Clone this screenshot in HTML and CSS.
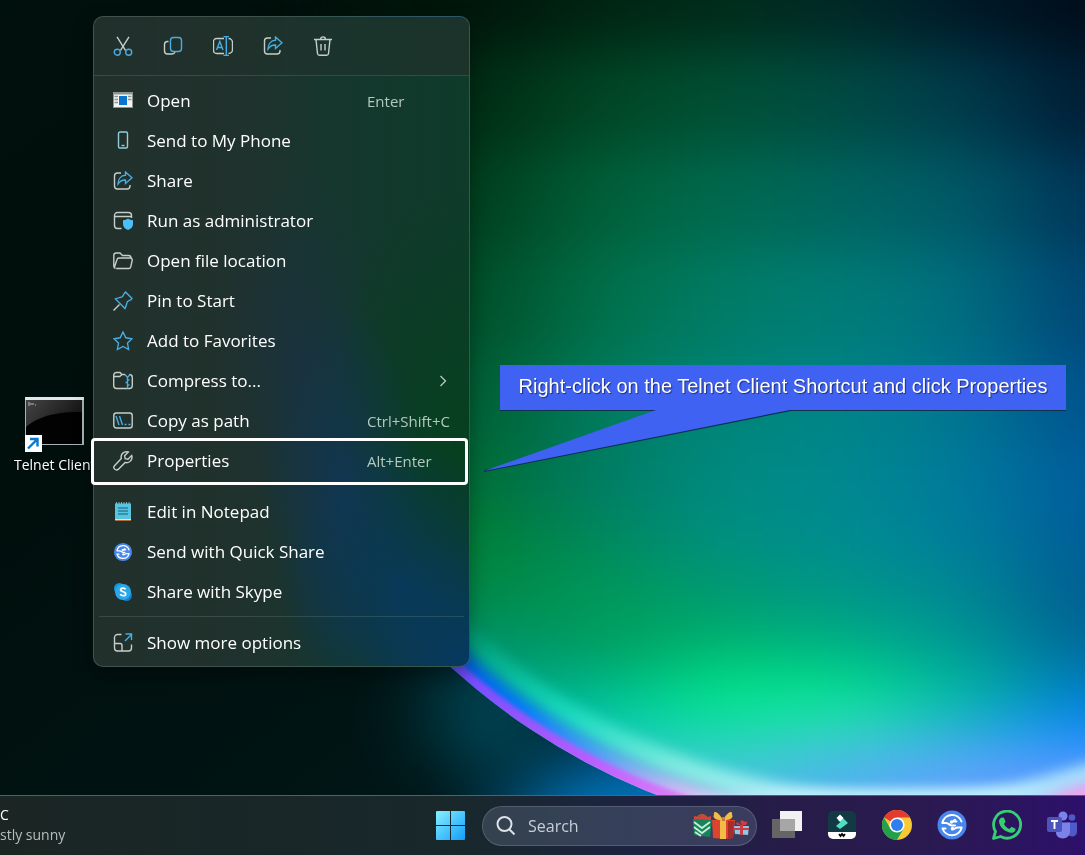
FILE: index.html
```html
<!DOCTYPE html>
<html lang="en">
<head>
<meta charset="utf-8">
<title>Desktop</title>
<link rel="stylesheet" href="styles.css">
</head>
<body>
<svg class="wallpaper" viewBox="0 0 1085 855" preserveAspectRatio="xMidYMid slice" aria-hidden="true">
  <defs>
    <clipPath id="sphere"><circle cx="900" cy="174" r="667"/></clipPath>
    <filter id="b8" color-interpolation-filters="sRGB" x="-50%" y="-50%" width="200%" height="200%"><feGaussianBlur stdDeviation="7"/></filter>
    <filter id="b3" color-interpolation-filters="sRGB" x="-50%" y="-50%" width="200%" height="200%"><feGaussianBlur stdDeviation="2"/></filter>
    <filter id="b20" color-interpolation-filters="sRGB" x="-60%" y="-150%" width="220%" height="400%"><feGaussianBlur stdDeviation="20 12"/></filter>
    <filter id="b50" color-interpolation-filters="sRGB" x="-150%" y="-150%" width="400%" height="400%"><feGaussianBlur stdDeviation="42"/></filter>
    <filter id="strips" color-interpolation-filters="sRGB" filterUnits="userSpaceOnUse" x="-200" y="-250" width="1600" height="1400"><feGaussianBlur stdDeviation="38 28"/></filter>
    <linearGradient id="space" x1="0" y1="0" x2="1" y2="1"><stop offset="0" stop-color="#00100c"/><stop offset=".3" stop-color="#000f0c"/><stop offset="1" stop-color="#001c20"/></linearGradient>
    <linearGradient id="r0" gradientUnits="userSpaceOnUse" x1="470" x2="1085" y1="0" y2="0"><stop offset="0" stop-color="#00140a"/><stop offset=".21" stop-color="#002412"/><stop offset=".41" stop-color="#002c1a"/><stop offset=".62" stop-color="#002826"/><stop offset=".81" stop-color="#001828"/><stop offset="1" stop-color="#000c18"/></linearGradient>
    <linearGradient id="r1" gradientUnits="userSpaceOnUse" x1="470" x2="1085" y1="0" y2="0"><stop offset="0" stop-color="#002a12"/><stop offset=".21" stop-color="#004624"/><stop offset=".41" stop-color="#005034"/><stop offset=".62" stop-color="#004a44"/><stop offset=".81" stop-color="#003a4c"/><stop offset="1" stop-color="#001c34"/></linearGradient>
    <linearGradient id="r2" gradientUnits="userSpaceOnUse" x1="470" x2="1085" y1="0" y2="0"><stop offset="0" stop-color="#003c1c"/><stop offset=".21" stop-color="#006038"/><stop offset=".41" stop-color="#006a4e"/><stop offset=".62" stop-color="#006460"/><stop offset=".81" stop-color="#005868"/><stop offset="1" stop-color="#003458"/></linearGradient>
    <linearGradient id="r3" gradientUnits="userSpaceOnUse" x1="470" x2="1085" y1="0" y2="0"><stop offset="0" stop-color="#004c26"/><stop offset=".21" stop-color="#007048"/><stop offset=".41" stop-color="#007c66"/><stop offset=".62" stop-color="#007c78"/><stop offset=".81" stop-color="#006c80"/><stop offset="1" stop-color="#004474"/></linearGradient>
    <linearGradient id="r4" gradientUnits="userSpaceOnUse" x1="470" x2="1085" y1="0" y2="0"><stop offset="0" stop-color="#005c30"/><stop offset=".21" stop-color="#007c5c"/><stop offset=".41" stop-color="#008478"/><stop offset=".62" stop-color="#008488"/><stop offset=".81" stop-color="#007490"/><stop offset="1" stop-color="#00508c"/></linearGradient>
    <linearGradient id="r5" gradientUnits="userSpaceOnUse" x1="470" x2="1085" y1="0" y2="0"><stop offset="0" stop-color="#006c34"/><stop offset=".21" stop-color="#007c64"/><stop offset=".41" stop-color="#008a80"/><stop offset=".62" stop-color="#008890"/><stop offset=".81" stop-color="#00789c"/><stop offset="1" stop-color="#005c9c"/></linearGradient>
    <linearGradient id="r6" gradientUnits="userSpaceOnUse" x1="470" x2="1085" y1="0" y2="0"><stop offset="0" stop-color="#008034"/><stop offset=".21" stop-color="#00885c"/><stop offset=".41" stop-color="#009080"/><stop offset=".62" stop-color="#008c92"/><stop offset=".81" stop-color="#007c9c"/><stop offset="1" stop-color="#005c98"/></linearGradient>
    <linearGradient id="r7" gradientUnits="userSpaceOnUse" x1="470" x2="1085" y1="0" y2="0"><stop offset="0" stop-color="#008848"/><stop offset=".21" stop-color="#009a58"/><stop offset=".41" stop-color="#009c70"/><stop offset=".62" stop-color="#009888"/><stop offset=".81" stop-color="#008894"/><stop offset="1" stop-color="#005c90"/></linearGradient>
    <linearGradient id="r8" gradientUnits="userSpaceOnUse" x1="470" x2="1085" y1="0" y2="0"><stop offset="0" stop-color="#009070"/><stop offset=".21" stop-color="#009c60"/><stop offset=".41" stop-color="#00b86e"/><stop offset=".62" stop-color="#00b486"/><stop offset=".81" stop-color="#009898"/><stop offset="1" stop-color="#00689c"/></linearGradient>
    <linearGradient id="r9" gradientUnits="userSpaceOnUse" x1="470" x2="1085" y1="0" y2="0"><stop offset="0" stop-color="#00a088"/><stop offset=".21" stop-color="#00b88c"/><stop offset=".41" stop-color="#00ec8e"/><stop offset=".62" stop-color="#00e48e"/><stop offset=".81" stop-color="#00b89c"/><stop offset="1" stop-color="#007cc8"/></linearGradient>
    <linearGradient id="r10" gradientUnits="userSpaceOnUse" x1="470" x2="1085" y1="0" y2="0"><stop offset="0" stop-color="#00c0a8"/><stop offset=".21" stop-color="#00ccb4"/><stop offset=".41" stop-color="#10dca0"/><stop offset=".62" stop-color="#34dcc0"/><stop offset=".81" stop-color="#20b0d8"/><stop offset="1" stop-color="#0888ff"/></linearGradient>
    <linearGradient id="r11" gradientUnits="userSpaceOnUse" x1="470" x2="1085" y1="0" y2="0"><stop offset="0" stop-color="#40d8d0"/><stop offset=".41" stop-color="#48c8dc"/><stop offset=".62" stop-color="#50b0f0"/><stop offset=".81" stop-color="#64a2ff"/><stop offset="1" stop-color="#5c98ff"/></linearGradient>
    <linearGradient id="rim" gradientUnits="userSpaceOnUse" x1="250" y1="300" x2="760" y2="840"><stop offset="0" stop-color="#001018" stop-opacity="0"/><stop offset=".45" stop-color="#2040c0"/><stop offset=".58" stop-color="#7a4dff"/><stop offset=".76" stop-color="#b85cff"/><stop offset="1" stop-color="#ff9cf0"/></linearGradient>
    <linearGradient id="rimblue" gradientUnits="userSpaceOnUse" x1="250" y1="300" x2="760" y2="840"><stop offset="0" stop-color="#001018" stop-opacity="0"/><stop offset=".5" stop-color="#0050e0"/><stop offset=".65" stop-color="#0876ff"/><stop offset=".76" stop-color="#5098f8"/><stop offset=".88" stop-color="#d8b8f4"/><stop offset="1" stop-color="#f4dcfa"/></linearGradient>
    <linearGradient id="rimteal" gradientUnits="userSpaceOnUse" x1="400" y1="560" x2="760" y2="840"><stop offset="0" stop-color="#00a080" stop-opacity="0"/><stop offset=".25" stop-color="#08c8a8" stop-opacity=".35"/><stop offset=".5" stop-color="#20e0c4" stop-opacity=".85"/><stop offset=".75" stop-color="#80ece0"/><stop offset="1" stop-color="#b4ecf8"/></linearGradient>
  </defs>
  <rect width="1085" height="855" fill="url(#space)"/>
  <ellipse cx="650" cy="840" rx="150" ry="95" fill="#0078c4" filter="url(#b50)"/>
  <ellipse cx="490" cy="710" rx="60" ry="60" fill="#006078" opacity=".8" filter="url(#b50)"/>
  <g clip-path="url(#sphere)">
    <g filter="url(#strips)">
      <rect x="-150" y="-200" width="1450" height="251" fill="url(#r0)"/>
      <rect x="-150" y="50" width="1450" height="101" fill="url(#r1)"/>
      <rect x="-150" y="150" width="1450" height="101" fill="url(#r2)"/>
      <rect x="-150" y="250" width="1450" height="101" fill="url(#r3)"/>
      <rect x="-150" y="350" width="1450" height="91" fill="url(#r4)"/>
      <rect x="-150" y="440" width="1450" height="71" fill="url(#r5)"/>
      <rect x="-150" y="510" width="1450" height="61" fill="url(#r6)"/>
      <rect x="-150" y="570" width="1450" height="56" fill="url(#r7)"/>
      <rect x="-150" y="625" width="1450" height="46" fill="url(#r8)"/>
      <rect x="-150" y="670" width="1450" height="41" fill="url(#r9)"/>
      <rect x="-150" y="710" width="1450" height="39" fill="url(#r10)"/>
      <rect x="-150" y="748" width="1450" height="300" fill="url(#r11)"/>
    </g>
    <rect x="100" y="-150" width="240" height="500" fill="#000f0c" filter="url(#b50)"/>
    <circle cx="900" cy="162" r="644" fill="none" stroke="url(#rimteal)" stroke-width="22" filter="url(#b8)"/>
    <circle cx="900" cy="166" r="664" fill="none" stroke="url(#rimblue)" stroke-width="24" filter="url(#b8)"/>
    <circle cx="900" cy="174" r="664" fill="none" stroke="url(#rim)" stroke-width="13" filter="url(#b3)"/>
    <ellipse cx="920" cy="808" rx="240" ry="18" fill="#c4f0fc" filter="url(#b8)"/>
    <ellipse cx="1095" cy="780" rx="90" ry="10" fill="#a0d4ff" filter="url(#b20)" transform="rotate(-17 1095 780)"/>
    <ellipse cx="1095" cy="797" rx="62" ry="14" fill="#f49cec" filter="url(#b8)" transform="rotate(-15 1095 797)"/>
  </g>
</svg>

<main class="desktop">
  <a class="shortcut" href="#telnet">
    <svg class="shortcut-icon" viewBox="0 0 60 56" aria-hidden="true">
      <defs><linearGradient id="cmd" x1="0" y1="0" x2="1" y2=".4"><stop offset="0" stop-color="#444"/><stop offset="1" stop-color="#161616"/></linearGradient></defs>
      <rect x="1" y="0" width="59" height="48" fill="#a9b3b6"/><rect x="1" y="0" width="59" height="3" fill="#e2e8ea"/>
      <rect x="2" y="3" width="56" height="44" fill="#020202"/><path d="M2 3h56v12C34 14 14 19 2 30z" fill="url(#cmd)"/>
      <path d="M4 6h2M4 8h2M7 6v2M9 6v2M11 8h1" stroke="#bbb" fill="none"/>
      <rect x="1" y="38" width="17" height="17" fill="#fff"/><path d="M4 51.500l9-9M6 42h7.500v7.500" stroke="#0878ce" stroke-width="2.400" fill="none"/>
    </svg>
    <span class="shortcut-name">Telnet Client</span>
  </a>

  <section class="menu" aria-label="Context menu">
    <div class="menu-tools">
      <button class="tool" aria-label="Cut"><svg class="icon" viewBox="0 0 20 20"><path d="M4 .8l8.500 13.500M16 .8L7.500 14.300"/><g class="blue"><circle cx="4.300" cy="16.200" r="3"/><circle cx="15.700" cy="16.200" r="3"/></g></svg></button>
      <button class="tool" aria-label="Copy"><svg class="icon" viewBox="0 0 20 20"><path d="M5.500 5.500H4.500a3 3 0 00-3 3V15a3 3 0 003 3H9a3 3 0 003-2"/><rect class="blue" x="7.500" y="1.500" width="11" height="14" rx="3"/></svg></button>
      <button class="tool" aria-label="Rename"><svg class="icon" viewBox="0 0 20 20"><path d="M11 2.500H3.500a3 3 0 00-3 3v9a3 3 0 003 3H11M15.500 2.500a4 4 0 014 4v7a4 4 0 01-4 4"/><path class="blue" d="M13.300.5v19M10.500.5H16M10.500 19.500H16M3.500 14l3.300-8.500L10 14M4.700 11.500h4.200"/></svg></button>
      <button class="tool" aria-label="Share"><svg class="icon" viewBox="0 0 20 20"><use href="#share"/></svg></button>
      <button class="tool" aria-label="Delete"><svg class="icon" viewBox="0 0 20 20"><path d="M1 3.500h18M3 3.500l1.500 14a2 2 0 002 1.800h7a2 2 0 002-1.800L17 3.500M7.500 3.500C7.500 0 12.500 0 12.500 3.500M8 8v6.500M12 8v6.500"/></svg></button>
    </div>
    <div class="menu-list">
      <button class="item"><svg class="icon plain" viewBox="0 0 20 20"><path fill="#8b9494" d="M0 1h20v16H0z"/><path fill="#f4f4f4" d="M1 3.500h18V16H1z"/><path fill="#0a74cf" d="M6 5h8v9H6z"/><path stroke="#8d9494" d="M1.500 5.500H5M1.500 8.500H5M1.500 11.500H5M15 5.500h3.500M15 8.500h3.500"/></svg><span>Open</span><kbd>Enter</kbd></button>
      <button class="item"><svg class="icon" viewBox="0 0 20 20"><rect x="5.500" y="1" width="9" height="16" rx="1.500" stroke="#8fd0dd"/><path d="M8.500 14.500h3" stroke="#8fd0dd"/></svg><span>Send to My Phone</span></button>
      <button class="item"><svg class="icon" viewBox="0 0 20 20"><g id="share"><path d="M8 2H4.500a3 3 0 00-3 3v10a3 3 0 003 3h9.500a3 3 0 003-3V14"/><path class="blue" d="M12.500 1l6.500 5.800-6.500 5.700V9C9 8.800 7 10 5 13c0-5 3-8.500 7.500-8.700z"/></g></svg><span>Share</span></button>
      <button class="item"><svg class="icon" viewBox="0 0 20 20"><path d="M8.500 17.500H4.500a3 3 0 01-3-3V4.500a3 3 0 013-3h11a3 3 0 013 3V7M1.500 5.500h17"/><path d="M15 7.500c1.500 1.200 3 1.500 5 1.700v3.800c0 3-2 4.800-5 6-3-1.200-5-3-5-6V9.200c2-.2 3.500-.5 5-1.700z" fill="#4cc0fa" stroke="none"/></svg><span>Run as administrator</span></button>
      <button class="item"><svg class="icon" viewBox="0 0 20 20"><path d="M2.500 17.500A2.500 2.500 0 01.8 15V4.500a2.500 2.500 0 012.500-2.500H7l2.500 2.500h6A2.500 2.500 0 0118 7M3.200 17.500h12.500a2 2 0 002-1.500l1.600-7A2 2 0 0017.500 7H6a2 2 0 00-2 1.500L1.500 16"/></svg><span>Open file location</span></button>
      <button class="item"><svg class="icon" viewBox="0 0 20 20"><path d="M.5 19.500l6-6"/><path class="blue" d="M12.500 1l6.500 6.500c-1 2-3 2-4.500 3-1 2-1 4-2.500 7L2.500 8C5.500 6.500 8 6.700 9.500 5.500c1.300-1.500 1.300-3 3-4.500z"/></svg><span>Pin to Start</span></button>
      <button class="item"><svg class="icon" viewBox="0 0 20 20"><path class="blue" d="M10 1l2.800 5.800 6.200.9-4.500 4.400 1.100 6.400L10 15.500l-5.600 3 1.100-6.400L1 7.700l6.200-.9z"/></svg><span>Add to Favorites</span></button>
      <button class="item"><svg class="icon" viewBox="0 0 20 20"><path d="M12 3.500H9L7 1.500H3.500A2.800 2.800 0 00.7 4.300v10.200a3 3 0 003 3H16.300a3 3 0 003-3V6.500a3 3 0 00-3-3M.7 5.500h6L9 3.500"/><path class="blue" d="M12 3.500l2.500 3 2.500-3M14.500 6.500v11M14.500 9h2M12.500 11.500h2M14.500 14h2"/></svg><span>Compress to...</span><svg class="arrow" viewBox="0 0 8 12"><path d="M1.500 1l5 5-5 5"/></svg></button>
      <button class="item"><svg class="icon" viewBox="0 0 20 20"><rect x=".8" y="2" width="18.400" height="15" rx="2.500"/><path class="blue" d="M3 5l3 9M6.500 5l3 9M11.500 13.500h2M15.500 13.500h2"/></svg><span>Copy as path</span><kbd>Ctrl+Shift+C</kbd></button>
      <button class="item marked"><svg class="icon" viewBox="0 0 20 20"><path d="M18.700 4.500l-3.700 3.700-2.800-.6-.6-2.800L15.300 1C11-.2 7.200 3 8.300 7.500L1.500 14.700c-2 2.300 1.300 5.600 3.700 3.700l7-7C16 12.700 20 9 18.700 4.500z"/></svg><span>Properties</span><kbd>Alt+Enter</kbd></button>
    </div>
    <div class="menu-list apps">
      <button class="item"><svg class="icon plain" viewBox="0 0 20 20"><path fill="#57c5df" d="M2 1.500h16v16H2z"/><path fill="#e7ded2" d="M2 17h16v1H2z"/><path fill="#b46d36" d="M2 18h16v1H2z"/><path stroke="#16617b" stroke-width="1.200" d="M5 6h10M5 9h10M5 12h10"/><path stroke="#9adce9" stroke-dasharray="1 1.500" d="M3 1h14"/></svg><span>Edit in Notepad</span></button>
      <button class="item"><svg class="icon plain" viewBox="0 0 32 32"><g id="quickshare"><circle cx="16" cy="16" r="14.500" fill="#4787ec"/><g fill="none" stroke="#fff" stroke-width="2" stroke-linecap="round" stroke-linejoin="round"><path d="M25.500 12.500A10 10 0 006.300 14H10c3 0 3.500 2.500 6 2.500h3"/><path d="M6.500 19.500A10 10 0 0025.700 18.500H22c-3 0-3.500 2-6 2M6.500 19.500h3"/><path d="M16.500 12.500L19 10.800M16.500 12.500h4"/></g><circle cx="15.500" cy="13" r="1.700" fill="#fff"/><circle cx="16.500" cy="19.500" r="1.700" fill="#fff"/></g></svg><span>Send with Quick Share</span></button>
      <button class="item"><svg class="icon plain" viewBox="0 0 20 20"><circle cx="6.500" cy="6.500" r="5.500" fill="#1497d5"/><circle cx="13.500" cy="13.500" r="5.500" fill="#147bc5"/><circle cx="10" cy="10" r="8" fill="#28a8ea"/><path d="M12.600 7.400C11.500 5.500 7.400 5.900 7.600 7.900c.2 2.400 5.100 1.300 5.100 4 0 2.300-4.300 2.500-5.400.1" fill="none" stroke="#fff" stroke-width="1.800"/></svg><span>Share with Skype</span></button>
    </div>
    <div class="menu-list more">
      <button class="item"><svg class="icon" viewBox="0 0 20 20"><path d="M8.500 1.500h-4a3 3 0 00-3 3V15a3 3 0 003 3H15.500a3 3 0 003-3V11.500M1.500 10.500H7a2 2 0 012 2V18"/><path class="blue" d="M12 8l6.500-6.500M12.500 1h6v6"/></svg><span>Show more options</span></button>
    </div>
  </section>

  <aside class="callout">
    <svg class="callout-tail" viewBox="0 0 310 64" aria-hidden="true"><path d="M0 61L307 0" stroke="#103050" stroke-width="2"/><path d="M172 0h134L0 61z" fill="#3f62f2"/></svg>
    <p>Right-click on the Telnet Client Shortcut and click Properties</p>
  </aside>
</main>

<footer class="taskbar">
  <button class="weather"><span>C</span><small>stly sunny</small></button>
  <div class="apps-row">
    <button class="app start" aria-label="Start"><svg viewBox="0 0 32 32"><defs><linearGradient id="win" gradientUnits="userSpaceOnUse" x1="2" y1="2" x2="30" y2="30"><stop offset="0" stop-color="#80ecff"/><stop offset="1" stop-color="#109cfa"/></linearGradient></defs><path fill="url(#win)" d="M1 1h14v14H0V2a1 1 0 011-1zM15 1h13a1 1 0 011 1v13H15zM0 16h14v14H1a1 1 0 01-1-1zM15 16h14v13a1 1 0 01-1 1H15z"/><path d="M14.500 1v29" stroke="#18282e"/></svg></button>
    <label class="search">
      <svg class="lens" viewBox="0 0 20 20" aria-hidden="true"><circle cx="8.500" cy="8" r="7"/><path d="M13.500 13.500l5 5"/></svg>
      <input type="text" placeholder="Search" aria-label="Search">
      <svg class="gifts" viewBox="0 0 58 30" aria-hidden="true">
        <path d="M5 9c0-7 10-7 10 0" fill="none" stroke="#9b6b32" stroke-width="1.500"/><path d="M2 5l5 1 4-3 5 3 3-1v6H2z" fill="#d4443c"/>
        <path d="M1 8l19 1-2 17-16-2z" fill="#16845a"/><path d="M2 11l8 6 8-6M2 16l8 6 8-6M3 21l6 4" stroke="#c9ebd9" stroke-width="1.800" fill="none"/>
        <path fill="#dc4432" d="M20 9h23l-2 18-10 1-10-1z"/><path fill="#a92c2b" d="M36 10h6l-1 17-5 1z"/><path fill="#f3bc45" d="M28 9h6v19h-6zM31 9C26 0 21-1 22 4c-2 2 2 6 9 5zM31 9c5-9 10-10 9-5 2 2-2 6-9 5z"/><path fill="#c4832a" d="M30 6h3v4h-3z"/>
        <path fill="#8dc9e6" d="M42 15h15l-1 9-13-1z"/><path fill="#cf3d43" d="M48 14h3v10h-3zM42 17h15v2H42zM49 14c-5-5-6-2-4 0zM50 14c4-6 7-3 4 0zM50 9l3 2-3 3-2-3z"/>
      </svg>
    </label>
    <button class="app" aria-label="Task view"><svg viewBox="0 0 32 32"><path fill="#656565" d="M1 9h23v19H1z"/><path fill="#f1f1f1" d="M9 1h22v20H9z"/><path fill="#a6a6a6" d="M9 9h15v12H9z"/></svg></button>
    <button class="app" aria-label="Filmora"><svg viewBox="0 0 32 32"><rect x="2" y="1" width="28" height="28" rx="5" fill="#113a45"/><path fill="#fff" d="M2 22h28v2a5 5 0 01-5 5H7a5 5 0 01-5-5z"/><path fill="#50dfc0" d="M16 7l6 6-8 6-4-3 4.500-4L12 10.500z"/><path fill="#fff" d="M14 4.500l3.500 3.500-3.500 3.500L10.500 8z"/><path d="M13 24l1.500 2 1.500-2 1.500 2 1.500-2" fill="none" stroke="#000" stroke-width="1.800"/></svg></button>
    <button class="app" aria-label="Chrome"><svg viewBox="0 0 32 32"><circle cx="16" cy="15" r="15" fill="#f9c934"/><path fill="#e33b2f" d="M16 15L3 7.500A15 15 0 0129 7.500H16z"/><path fill="#24a04a" d="M3 7.500A15 15 0 0016 30l6.500-11.300L16 15 9.500 18.800z"/><circle cx="16" cy="15" r="7.600" fill="#fff"/><circle cx="16" cy="15" r="6" fill="#2d7ff0"/></svg></button>
    <button class="app" aria-label="Quick Share"><svg viewBox="0 1 32 32"><use href="#quickshare"/></svg></button>
    <button class="app" aria-label="WhatsApp"><svg viewBox="0 0 32 32"><path d="M2.500 28.500l2-7a13.500 13.500 0 115.200 5z" fill="none" stroke="#37ce73" stroke-width="2.800" stroke-linejoin="round"/><path fill="#37ce73" d="M11 7.500l2 .2 1.500 4-1.500 2.200c1.300 2.500 3 4 5.500 5l2-2.200 4 2c.3 2.500-2 4.300-4.500 4-6.500-1-11.500-6-12-11 0-2 1-3.800 3-4.200z"/></svg></button>
    <button class="app" aria-label="Teams"><svg viewBox="0 0 32 32"><circle cx="17" cy="6" r="4.500" fill="#7b83eb"/><circle cx="26" cy="7.500" r="3.300" fill="#5059c9"/><path fill="#5059c9" d="M20 12.500h11v9c0 5-5 6-8 4z"/><path fill="#7b83eb" d="M10 12.500h14v9c0 9-14 9-14 1z"/><rect x="1" y="7" width="15" height="15" rx="2" fill="#4b53bc"/><path d="M5 11h7M8.500 11v8" stroke="#fff" stroke-width="1.900"/></svg></button>
  </div>
</footer>
</body>
</html>
```
FILE: styles.css
```css
* { box-sizing: border-box; }

body {
  margin: 0;
  min-height: 100vh;
  display: flex;
  flex-direction: column;
  background: #000f0c;
  color: #fff;
  font-family: "Open Sans", "Noto Sans", sans-serif;
  overflow: hidden;
}

button {
  border: 0;
  padding: 0;
  background: none;
  color: inherit;
  font: inherit;
}

.wallpaper {
  position: fixed;
  inset: 0;
  width: 100%;
  height: 100%;
}

.desktop {
  position: relative;
  flex: 1;
}

.shortcut {
  position: absolute;
  left: 12px;
  top: 397px;
  display: flex;
  flex-direction: column;
  color: #fff;
  text-decoration: none;
  white-space: nowrap;
}

.shortcut-icon { width: 60px; height: 56px; margin-left: 12px; }

.shortcut-name {
  padding-left: 2px;
  font-size: 14px;
  line-height: 24px;
  text-shadow: 0 1px 2px #000;
}

.menu {
  position: absolute;
  left: 93px;
  top: 16px;
  width: 377px;
  padding-bottom: 3px;
  border: 1px solid rgba(120, 145, 135, .35);
  border-radius: 10px;
  background:
    radial-gradient(ellipse 110px 130px at 100% 100%, rgba(6, 56, 104, .9), transparent),
    radial-gradient(ellipse 120px 150px at 82% 88%, rgba(6, 56, 98, .8), transparent),
    radial-gradient(ellipse 80px 180px at 66% 72%, rgba(18, 52, 88, .8), transparent),
    radial-gradient(ellipse 80px 180px at 54% 52%, rgba(26, 48, 72, .55), transparent),
    radial-gradient(ellipse 160px 260px at 100% 66%, #06401f, transparent),
    linear-gradient(90deg, #22302c 0%, #20322d 40%, #15372e 65%, #0e3b2a 100%);
  box-shadow: 0 8px 20px rgba(0, 0, 0, .35);
}

.menu-tools {
  display: flex;
  gap: 10px;
  padding: 9px;
  border-bottom: 1px solid rgba(140, 165, 155, .22);
  border-radius: 10px 10px 0 0;
  background: linear-gradient(90deg, transparent, rgba(34, 48, 43, .7));
}

.tool {
  display: grid;
  place-items: center;
  width: 40px;
  height: 40px;
}

.icon {
  flex: none;
  width: 20px;
  height: 20px;
  fill: none;
  stroke: #c6cecb;
  stroke-width: 1.4;
}

.icon .blue { stroke: #48ade0; }
.icon.plain { stroke: none; }

.menu-list { padding-top: 5px; }
.menu-list.apps { padding: 11px 0 4px; }

.menu-list.more {
  margin: 0 5px;
  padding-top: 6px;
  border-top: 1px solid rgba(140, 165, 155, .22);
}

.more .item { padding-left: 14px; }

.item {
  position: relative;
  display: flex;
  align-items: center;
  gap: 14px;
  width: 100%;
  height: 40px;
  padding: 0 18px 0 19px;
  font-size: 17px;
  line-height: 24px;
  text-align: left;
  white-space: nowrap;
}

.item kbd {
  margin-left: auto;
  width: 84px;
  color: #b3c9be;
  font-family: inherit;
  font-size: 15px;
}

.arrow {
  width: 8px;
  height: 12px;
  margin: 0 4px 0 auto;
  fill: none;
  stroke: #b9c9c2;
  stroke-width: 1.3;
}

.item.marked::after {
  content: "";
  position: absolute;
  inset: -3px 1px -4px -3px;
  border: 3px solid #fff;
  border-radius: 4px;
}

.callout {
  position: absolute;
  left: 500px;
  top: 365px;
  width: 566px;
  height: 45px;
  background: #3f62f2;
  box-shadow: 0 1px 0 #103050;
}

.callout p {
  margin: 0;
  padding-bottom: 3px;
  font: 20px/42px "Liberation Sans", Arial, sans-serif;
  text-align: center;
  white-space: nowrap;
  text-shadow: 1px 1px 1px #1c2f80;
}

.callout-tail {
  position: absolute;
  left: -16px;
  top: 100%;
  width: 310px;
  height: 64px;
}

.taskbar {
  position: relative;
  display: flex;
  align-items: center;
  justify-content: space-between;
  height: 60px;
  padding-right: 7px;
  border-top: 1px solid rgba(150, 170, 170, .45);
  background: linear-gradient(90deg, #1b2524 0%, #18282b 42%, #1d2340 58%, #261c48 72%, #2a1a50 85%, #2d106a 100%);
}

.weather {
  display: flex;
  flex-direction: column;
  padding-bottom: 2px;
  font-size: 14px;
  line-height: 20px;
  text-align: left;
}

.weather small { color: #b5bebb; font-size: 14px; }
.apps-row { display: flex; align-items: center; gap: 23px; }
.app { width: 32px; height: 32px; }
.app svg { display: block; width: 32px; height: 32px; }
.start { margin-right: -9px; }

.search {
  display: flex;
  align-items: center;
  gap: 12px;
  width: 275px;
  height: 40px;
  margin-right: -9px;
  padding: 0 6px 0 13px;
  border: 1px solid rgba(170, 185, 200, .25);
  border-radius: 20px;
  background: rgba(110, 125, 145, .32);
}

.search input {
  flex: 1;
  min-width: 0;
  padding: 0;
  border: 0;
  outline: 0;
  background: none;
  color: #fff;
  font: 16px/24px "Open Sans", "Noto Sans", sans-serif;
}

.search input::placeholder { color: #c8ced6; opacity: 1; }
.lens { width: 20px; height: 20px; fill: none; stroke: #dde2e6; stroke-width: 2; }
.gifts { width: 58px; height: 30px; }
```
